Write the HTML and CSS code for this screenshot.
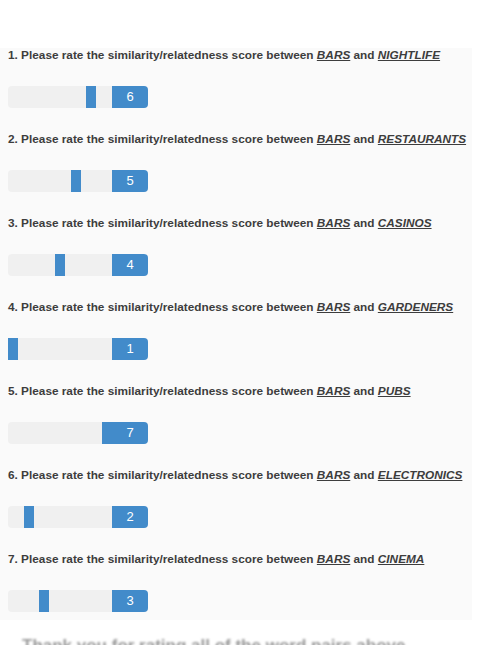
FILE: index.html
```html
<!DOCTYPE html>
<html lang="en">
<head>
    <meta charset="UTF-8">
    <meta name="viewport" content="width=device-width, initial-scale=1.0">
    <title>Word similarity survey</title>
    <link rel="stylesheet" href="styles.css">
</head>
<body>
    <div class="survey">
        <div class="question">
            <label for="q1">1. Please rate the similarity/relatedness score between <span class="word">BARS</span> and <span class="word">NIGHTLIFE</span></label>
            <div class="rating">
                <input type="range" id="q1" min="1" max="7" step="1" value="6" oninput="showValue(this)">
                <output class="score">6</output>
            </div>
        </div>
        <div class="question">
            <label for="q2">2. Please rate the similarity/relatedness score between <span class="word">BARS</span> and <span class="word">RESTAURANTS</span></label>
            <div class="rating">
                <input type="range" id="q2" min="1" max="7" step="1" value="5" oninput="showValue(this)">
                <output class="score">5</output>
            </div>
        </div>
        <div class="question">
            <label for="q3">3. Please rate the similarity/relatedness score between <span class="word">BARS</span> and <span class="word">CASINOS</span></label>
            <div class="rating">
                <input type="range" id="q3" min="1" max="7" step="1" value="4" oninput="showValue(this)">
                <output class="score">4</output>
            </div>
        </div>
        <div class="question">
            <label for="q4">4. Please rate the similarity/relatedness score between <span class="word">BARS</span> and <span class="word">GARDENERS</span></label>
            <div class="rating">
                <input type="range" id="q4" min="1" max="7" step="1" value="1" oninput="showValue(this)">
                <output class="score">1</output>
            </div>
        </div>
        <div class="question">
            <label for="q5">5. Please rate the similarity/relatedness score between <span class="word">BARS</span> and <span class="word">PUBS</span></label>
            <div class="rating">
                <input type="range" id="q5" min="1" max="7" step="1" value="7" oninput="showValue(this)">
                <output class="score">7</output>
            </div>
        </div>
        <div class="question">
            <label for="q6">6. Please rate the similarity/relatedness score between <span class="word">BARS</span> and <span class="word">ELECTRONICS</span></label>
            <div class="rating">
                <input type="range" id="q6" min="1" max="7" step="1" value="2" oninput="showValue(this)">
                <output class="score">2</output>
            </div>
        </div>
        <div class="question">
            <label for="q7">7. Please rate the similarity/relatedness score between <span class="word">BARS</span> and <span class="word">CINEMA</span></label>
            <div class="rating">
                <input type="range" id="q7" min="1" max="7" step="1" value="3" oninput="showValue(this)">
                <output class="score">3</output>
            </div>
        </div>
    </div>
    <p class="note">Thank you for rating all of the word pairs above.</p>

    <script>
        // keep the number box next to each slider in sync
        function showValue(slider) {
            slider.nextElementSibling.textContent = slider.value;
        }
    </script>
</body>
</html>
```

FILE: styles.css
```css
body {
    font-family: 'Liberation Sans', Arial, sans-serif;
    background: #fff;
    color: #3d3d3d;
    margin: 0;
}
.survey {
    background: #fafafa;
    width: 472px;
    margin-top: 48px;
    padding: 0 0 8px 8px;
    box-sizing: border-box;
}
.question {
    margin-bottom: 24px;
}
.question:last-child {
    margin-bottom: 0;
}
label {
    display: block;
    font-size: 11.8px;
    font-weight: bold;
    line-height: 14px;
    margin-bottom: 24px;
}
.word {
    font-style: italic;
    text-decoration: underline;
}
.rating {
    display: flex;
    height: 22px;
}
input[type="range"] {
    -webkit-appearance: none;
    appearance: none;
    width: 104px;
    height: 22px;
    margin: 0;
    background: #f0f0f0;
    border-radius: 4px 0 0 4px;
    outline: none;
}
input[type="range"]::-webkit-slider-thumb {
    -webkit-appearance: none;
    width: 10px;
    height: 22px;
    background: #428bca;
    border: none;
    cursor: pointer;
}
.score {
    width: 36px;
    height: 22px;
    line-height: 22px;
    background: #428bca;
    color: #fff;
    font-size: 13px;
    text-align: center;
    border-radius: 0 4px 4px 0;
}
.note {
    margin: 16px 0 0 22px;
    font-size: 17px;
    font-weight: bold;
    color: #999;
    filter: blur(1px);
}
```
